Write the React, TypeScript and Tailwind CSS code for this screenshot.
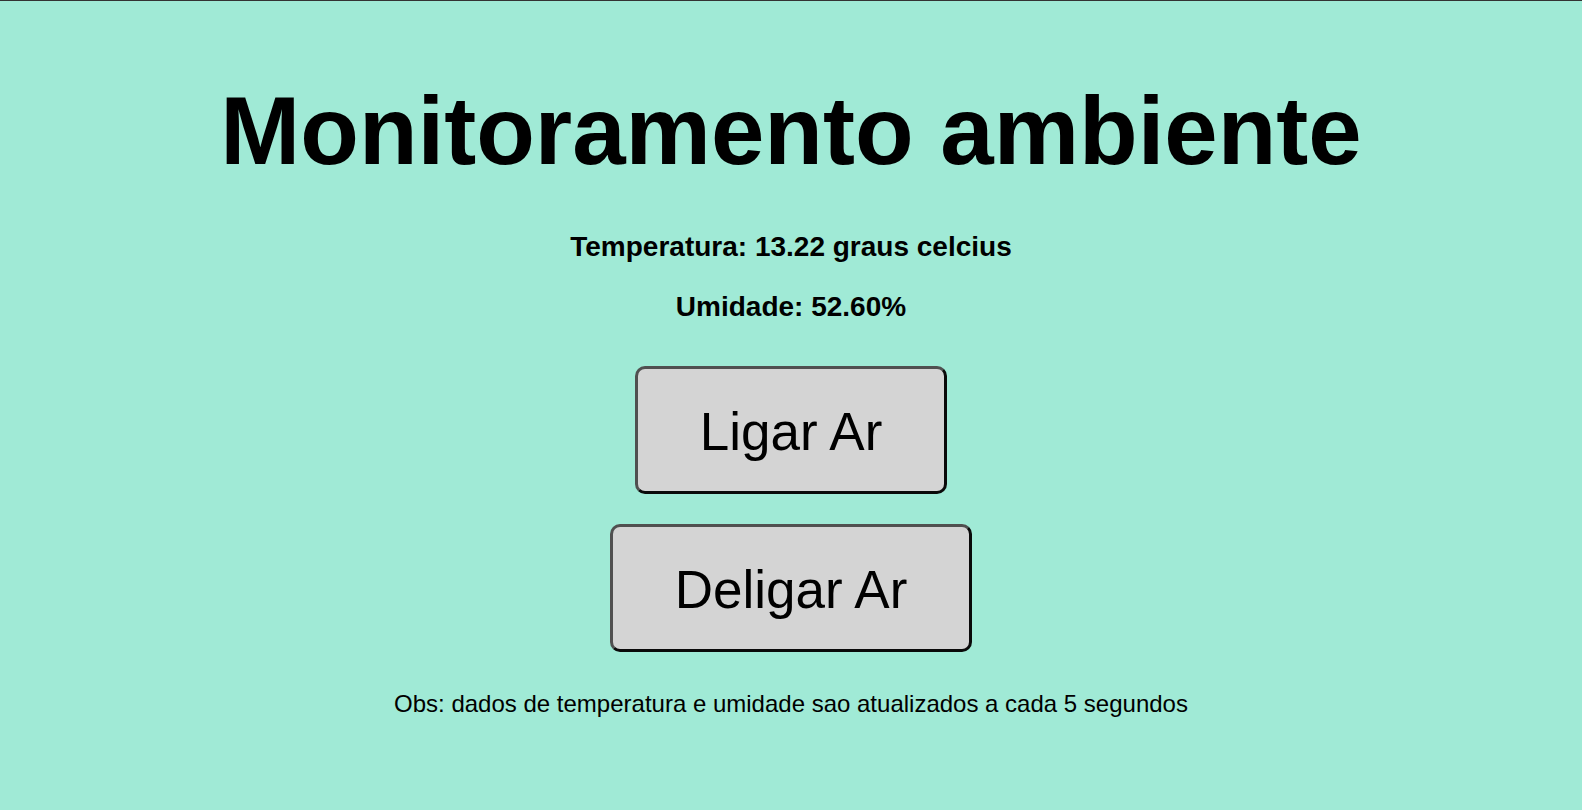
export default function App() {
  const temperatura = "13.22";
  const umidade = "52.60";

  return (
    <div className="min-h-[810px] border-t border-[#333] bg-[#a0ead6] font-['Liberation_Sans',Arial,sans-serif] text-black">
      <div className="flex flex-col items-center">
        <h1 className="mt-[82px] text-[96px] font-bold leading-[96px]">Monitoramento ambiente</h1>

        <p className="mt-[52px] text-[28px] font-bold leading-[32px]">
          Temperatura: {temperatura} graus celcius
        </p>
        <p className="mt-[28px] text-[28px] font-bold leading-[32px]">Umidade: {umidade}%</p>

        <button className="mt-[43px] rounded-[10px] border-[3px] border-t-[#505050] border-l-[#505050] border-b-[#0a0a0a] border-r-[#0a0a0a] bg-[#d4d4d4] px-[62px] pt-[32px] pb-[28px] text-[53px] leading-[62px]">
          Ligar Ar
        </button>
        <button className="mt-[30px] rounded-[10px] border-[3px] border-t-[#505050] border-l-[#505050] border-b-[#0a0a0a] border-r-[#0a0a0a] bg-[#d4d4d4] px-[62px] pt-[32px] pb-[28px] text-[53px] leading-[62px]">
          Deligar Ar
        </button>

        <p className="mt-[38px] text-[24px] leading-[28px]">
          Obs: dados de temperatura e umidade sao atualizados a cada 5 segundos
        </p>
      </div>
    </div>
  );
}
